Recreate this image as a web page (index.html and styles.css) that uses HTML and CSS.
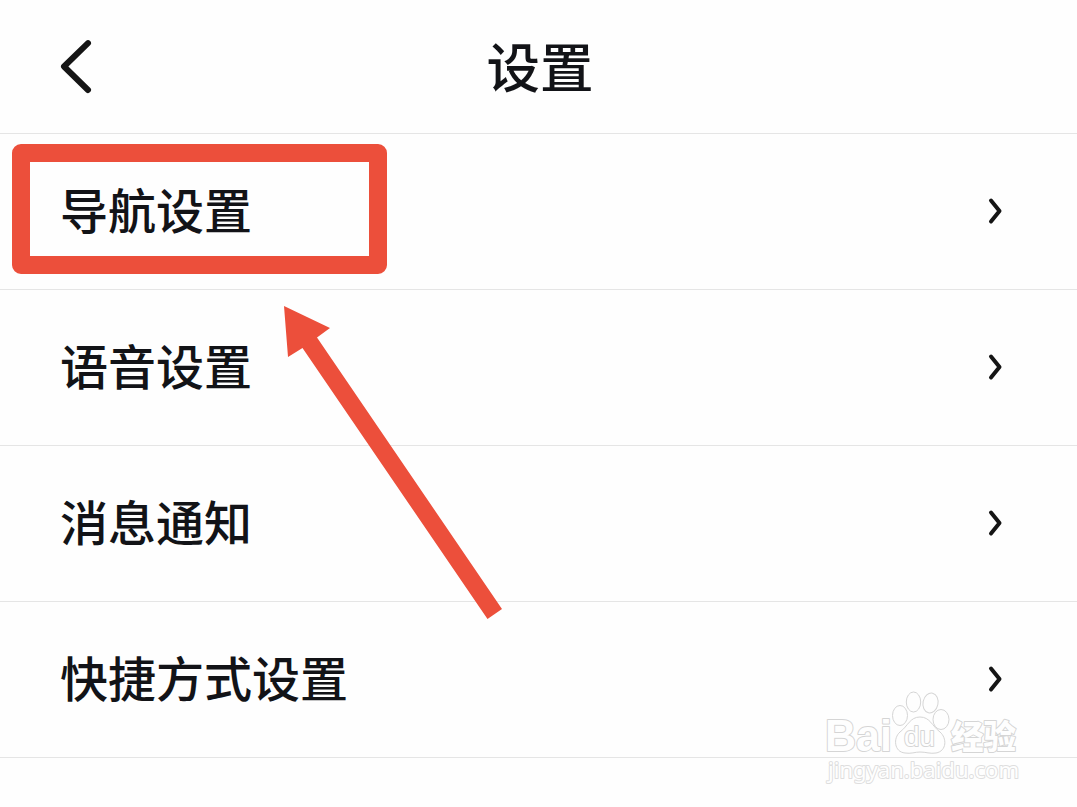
FILE: index.html
```html
<!DOCTYPE html>
<html lang="zh-CN">
<head>
<meta charset="utf-8">
<title>设置</title>
<link rel="stylesheet" href="styles.css">
</head>
<body>
<main class="screen">
  <header class="header">
    <svg class="back" width="36" height="60" viewBox="0 0 36 60"><path d="M31 6.200 7 29.500 31 53"/></svg>
    <h1 class="title">设置</h1>
  </header>
  <ul class="list">
    <li class="row"><span>导航设置</span><svg class="chevron" width="20" height="32" viewBox="0 0 20 32"><path d="M5 5.6 13.500 16 5 26.4"/></svg></li>
    <li class="row"><span>语音设置</span><svg class="chevron" width="20" height="32" viewBox="0 0 20 32"><path d="M5 5.6 13.500 16 5 26.4"/></svg></li>
    <li class="row"><span>消息通知</span><svg class="chevron" width="20" height="32" viewBox="0 0 20 32"><path d="M5 5.6 13.500 16 5 26.4"/></svg></li>
    <li class="row"><span>快捷方式设置</span><svg class="chevron" width="20" height="32" viewBox="0 0 20 32"><path d="M5 5.6 13.500 16 5 26.4"/></svg></li>
  </ul>
  <div class="highlight"></div>
  <svg class="arrow" width="220" height="316" viewBox="0 0 220 316"><path d="M0 0 46 22 33 31.500 218 303 203.500 313 18.500 42 4 51Z"/></svg>
  <svg class="watermark" width="220" height="110" viewBox="0 0 220 110">
    <g class="paw">
      <ellipse cx="80" cy="30.500" rx="7.500" ry="10"/>
      <ellipse cx="93.500" cy="17" rx="7.200" ry="10"/>
      <ellipse cx="110.500" cy="18" rx="7.500" ry="10" transform="rotate(12 110.500 18)"/>
      <ellipse cx="121" cy="34.500" rx="8" ry="10"/>
      <path d="M100 32C90 32 88 41 80 47C73 53 74 67 85 68C91 69 95 67 100 67C106 67 110 69 116 68C127 66 127 53 120 47C112 41 110 32 100 32Z"/>
    </g>
    <text class="brand" x="5" y="66" textLength="67" lengthAdjust="spacingAndGlyphs">Bai</text>
    <text class="du" x="84" y="61" textLength="31" lengthAdjust="spacingAndGlyphs">du</text>
    <text class="cjk" x="131" y="63.500" textLength="65" lengthAdjust="spacingAndGlyphs">经验</text>
    <text class="url" x="8" y="93" textLength="191" lengthAdjust="spacingAndGlyphs">jingyan.baidu.com</text>
  </svg>
</main>
</body>
</html>
```
FILE: styles.css
```css
* { box-sizing: border-box; }
body { margin: 0; background: #fefefe; font-family: "Noto Sans CJK SC", sans-serif; color: #121317; }
.screen { position: relative; width: 1077px; height: 807px; overflow: hidden; }
.header { display: grid; grid-template-columns: 1fr auto 1fr; align-items: center; height: 134px; padding: 0 54px 0 57px; border-bottom: 1px solid #e5e5e5; }
.title { margin: 0 0 4px; font-size: 53.5px; font-weight: 500; line-height: 80px; }
.back path, .chevron path { fill: none; stroke: #151515; stroke-linecap: round; stroke-linejoin: round; }
.back path { stroke-width: 6; }
.chevron path { stroke-width: 4; }
.list { margin: 0; padding: 0; list-style: none; }
.row { display: flex; align-items: center; justify-content: space-between; height: 156px; padding: 0 71px 2px 60px; border-bottom: 1px solid #e5e5e5; font-size: 48px; font-weight: 500; line-height: 72px; }
.row span { padding-bottom: 5px; }
.highlight { position: absolute; left: 12px; top: 144px; width: 375px; height: 130px; border: 18px solid #ec4f3b; border-radius: 9px; }
.arrow { position: absolute; left: 284px; top: 306px; fill: #ec4f3b; }
.watermark { position: absolute; left: 820px; top: 685px; fill: #fefefe; stroke: #d5d5d5; stroke-width: 1; }
.watermark text { paint-order: stroke; stroke-width: 2; stroke-linejoin: round; }
.brand { font: bold 44px "Liberation Sans", sans-serif; }
.du { font: 28px "Liberation Sans", sans-serif; }
.cjk { font: 900 33px "Noto Sans CJK SC", sans-serif; }
.url { font: 22px "Noto Sans", sans-serif; stroke: #dedede; }
```
